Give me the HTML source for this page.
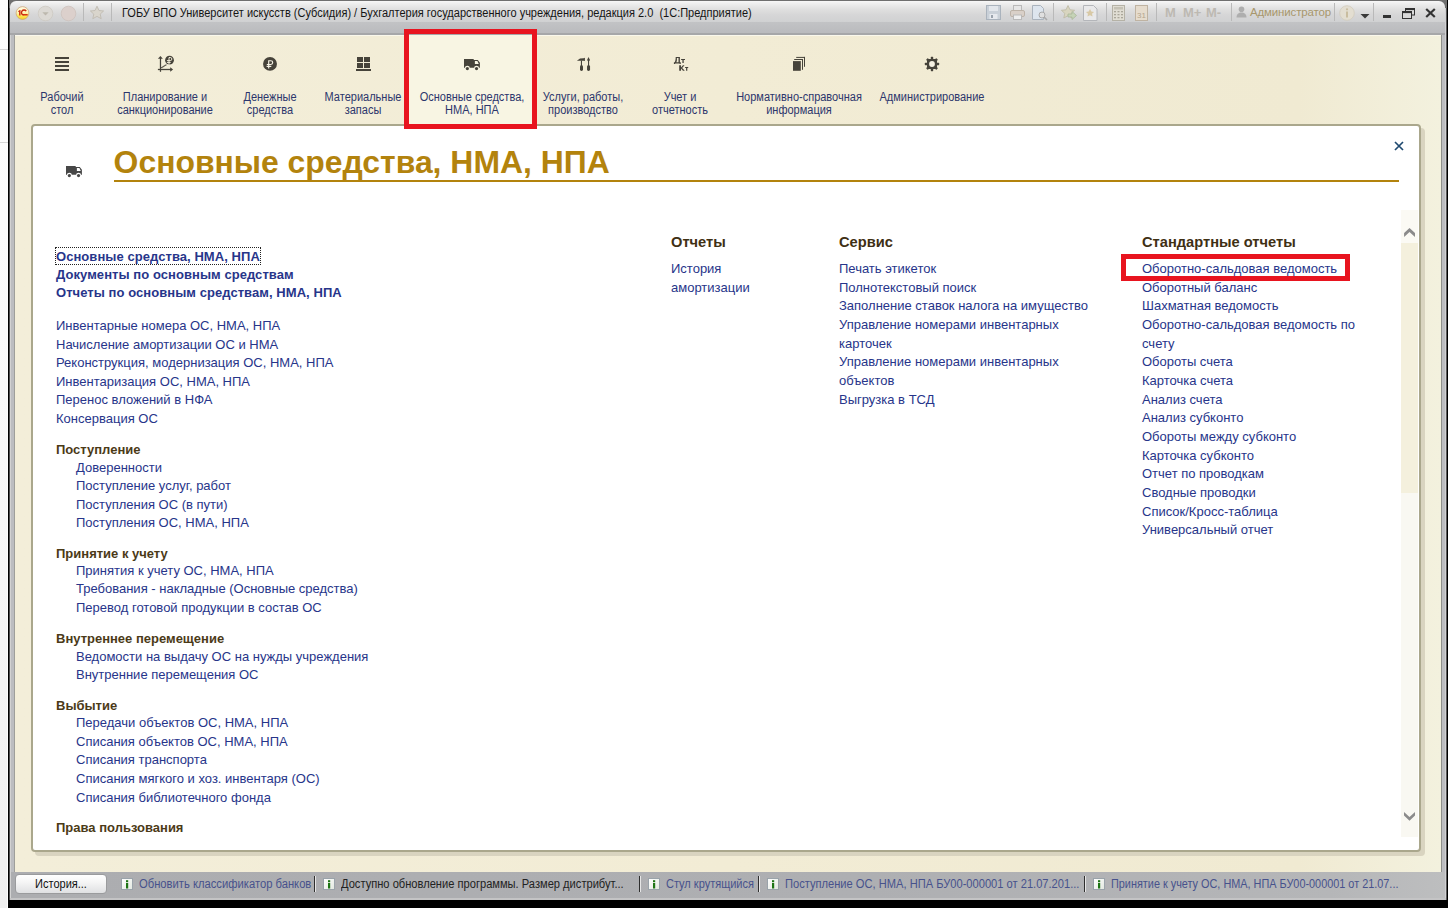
<!DOCTYPE html>
<html><head><meta charset="utf-8">
<style>
*{margin:0;padding:0;box-sizing:border-box}
html,body{width:1448px;height:908px;overflow:hidden;background:#fdfdfd;font-family:"Liberation Sans",sans-serif;position:relative}
.a{position:absolute}
.t{position:absolute;white-space:nowrap;line-height:15px}
.lk{color:#27358a;font-size:13px}
.lb{color:#27358a;font-size:13px;font-weight:bold;letter-spacing:0.06px}
.gh{color:#4b3a17;font-size:13px;font-weight:bold}
.ch{color:#3f3014;font-size:14.67px;font-weight:bold;line-height:17px}
.tl{color:#2c366c;font-size:12px;text-align:center;line-height:13px;transform:scaleX(0.917);transform-origin:50% 0}
.sg{font-size:12px;line-height:14px;transform:scaleX(0.917);transform-origin:0 0}
.sb{font-size:11px;line-height:13px;color:#39427c}
</style></head><body>
<!-- outer strip lines -->
<div class="a" style="left:0;top:0;width:7px;height:908px;background:linear-gradient(#fdfdfd 0,#fafafa 330px,#f5f5f5 640px,#efefef 908px)"></div>
<div class="a" style="left:0;top:49px;width:8px;height:1px;background:#d6d6d6"></div>
<div class="a" style="left:0;top:142px;width:8px;height:1px;background:#d6d6d6"></div>
<!-- black borders -->
<div class="a" style="left:8px;top:0;width:1px;height:908px;background:#000"></div>
<div class="a" style="left:8px;top:900px;width:1440px;height:8px;background:#000"></div>
<div class="a" style="left:1447px;top:0;width:1px;height:908px;background:#000"></div>
<!-- window frame -->
<div class="a" style="left:9px;top:0;width:1438px;height:900px;background:#bcbdc0"></div>
<div class="a" style="left:9px;top:0;width:1px;height:900px;background:#4a4a4a"></div>
<div class="a" style="left:10px;top:0;width:1px;height:900px;background:#d2d2d2"></div>
<div class="a" style="left:14px;top:35px;width:1px;height:837px;background:#9e9e9a"></div>
<div class="a" style="left:1441px;top:35px;width:1px;height:837px;background:#8e8f8b"></div>
<div class="a" style="left:1445px;top:0;width:1px;height:900px;background:#d0d0d2"></div>
<div class="a" style="left:1446px;top:0;width:1px;height:900px;background:#5a5a5a"></div>
<div class="a" style="left:9px;top:0;width:1438px;height:1px;background:#6f6f6f"></div>
<!-- title bar -->
<div class="a" style="left:9px;top:0;width:8px;height:8px;background:#707070"></div>
<div class="a" style="left:1439px;top:0;width:8px;height:8px;background:#707070"></div>
<div class="a" style="left:10px;top:1px;width:1435px;height:21px;border-radius:6px 6px 0 0;background:linear-gradient(#f8f8f8 0,#f0f0f0 2px,#e0e0e0 8px,#d6d6d7 14px,#d0d1d2 21px)"></div>
<div class="a" style="left:10px;top:22px;width:1435px;height:12px;background:linear-gradient(#c2c3c5,#b9babd)"></div>
<div class="a" style="left:10px;top:33px;width:1435px;height:2px;background:#a6a7a9"></div>
<!-- beige area -->
<div class="a" id="beige" style="left:15px;top:35px;width:1426px;height:837px;background:linear-gradient(90deg,#f3eed9,#f2ecd5 50%,#f0ead2 90%,#f3f1de)"></div>
<div class="a" style="left:15px;top:35px;width:1426px;height:1px;background:#faf8ec"></div>
<!-- status bar -->
<div class="a" style="left:11px;top:872px;width:1434px;height:26px;background:linear-gradient(90deg,#acadb0,#aeafb2 60%,#b5b6b8 92%,#bdbebf)"></div>
<div class="a" style="left:10px;top:898px;width:1436px;height:2px;background:#c4c4c5"></div>

<svg class="a" style="left:0;top:0" width="40" height="30" viewBox="0 0 40 30"><defs><linearGradient id="lg" x1="0" y1="0" x2="0" y2="1"><stop offset="0" stop-color="#fffbe6"/><stop offset="0.5" stop-color="#fff3b0"/><stop offset="0.75" stop-color="#fde44a"/><stop offset="1" stop-color="#f5cf2a"/></linearGradient></defs><circle cx="22.5" cy="13.05" r="6.4" fill="url(#lg)" stroke="#c89f70" stroke-width="0.7"/><path d="M18 11.2L19.9 9.9H20.5V15.5H19.1V11.6L18.4 12Z" fill="#c8280e"/><path d="M26.2 11.1A2.6 2.6 0 1 0 23.4 15.1" fill="none" stroke="#c8280e" stroke-width="1.4"/><rect x="23" y="14.1" width="4.7" height="1.4" fill="#d0200a"/></svg>
<svg class="a" style="left:37px;top:5px" width="17" height="17"><circle cx="8.5" cy="8.5" r="7.3" fill="#dcd9d4" stroke="#cdc9c2" stroke-width="0.8"/><path d="M5.3 7.3h6.4l-3.2 3.3z" fill="#bdb8ae"/></svg>
<svg class="a" style="left:60px;top:5px" width="17" height="17"><circle cx="8.5" cy="8.5" r="7.3" fill="#dcd0cc" stroke="#cdc2bd" stroke-width="0.8"/></svg>
<div class="a" style="left:83px;top:3px;width:1px;height:18px;background:#b9b9b9"></div>
<div class="a" style="left:111px;top:3px;width:1px;height:18px;background:#b9b9b9"></div>
<div class="a" style="left:1053px;top:3px;width:1px;height:18px;background:#b9b9b9"></div>
<div class="a" style="left:1106px;top:3px;width:1px;height:18px;background:#b9b9b9"></div>
<div class="a" style="left:1156px;top:3px;width:1px;height:18px;background:#b9b9b9"></div>
<div class="a" style="left:1231px;top:3px;width:1px;height:18px;background:#b9b9b9"></div>
<div class="a" style="left:1334px;top:3px;width:1px;height:18px;background:#b9b9b9"></div>
<div class="a" style="left:1373px;top:3px;width:1px;height:18px;background:#b9b9b9"></div>
<svg class="a" style="left:89px;top:5px" width="16" height="16" viewBox="0 0 16 16"><path d="M8 1.2l2 4.3 4.6.5-3.4 3.1 1 4.6L8 11.4l-4.2 2.3 1-4.6L1.4 6l4.6-.5z" fill="#d9d5cc" stroke="#bcb7ad" stroke-width="0.8"/></svg>
<div class="t sg" style="left:122px;top:6px;color:#151515">ГОБУ ВПО Университет искусств (Субсидия) / Бухгалтерия государственного учреждения, редакция 2.0&nbsp; (1С:Предприятие)</div>
<svg class="a" style="left:986px;top:5px" width="15" height="15"><rect x="0.5" y="0.5" width="14" height="14" fill="#c9d0d8" stroke="#aab3bd"/><rect x="3" y="1" width="9" height="5" fill="#e3e7ec"/><rect x="3.5" y="9" width="8" height="5" fill="#e6e9ee"/><rect x="5" y="10" width="2" height="3" fill="#9aa3ad"/></svg>
<svg class="a" style="left:1010px;top:5px" width="15" height="15"><rect x="3.5" y="0.5" width="8" height="5" fill="#e6e6e6" stroke="#b9b9b9"/><rect x="0.5" y="5.5" width="14" height="6" rx="1.5" fill="#d9d0c8" stroke="#bdb3a8"/><rect x="3.5" y="10" width="8" height="4.5" fill="#eeeeee" stroke="#b9b9b9"/></svg>
<svg class="a" style="left:1032px;top:5px" width="16" height="16"><path d="M0.5 0.5h8l3 3v11h-11z" fill="#dde5ee" stroke="#aab3bd"/><circle cx="10" cy="10" r="3" fill="#dfdfdf" stroke="#a9a9a9"/><path d="M12 12l3 3" stroke="#a9a9a9" stroke-width="1.6"/></svg>
<svg class="a" style="left:1060px;top:4px" width="18" height="18" viewBox="0 0 18 18"><path d="M8 1.5l2 4.3 4.6.5-3.4 3.1 1 4.6L8 11.7l-4.2 2.3 1-4.6L1.4 6.3l4.6-.5z" fill="#d8d5bf" stroke="#bdb9a3" stroke-width="0.8"/><path d="M8 10h4v-2.5l4.5 4-4.5 4V13H8z" fill="#c5d3b6" stroke="#a9b79a" stroke-width="0.8"/></svg>
<svg class="a" style="left:1083px;top:5px" width="15" height="16"><path d="M0.5 0.5h10l3.5 3.5v11.5h-13.5z" fill="#e9e9ea" stroke="#b4b6ba"/><path d="M7 4l1.3 2.6 2.8.3-2.1 1.9.6 2.8L7 10.3l-2.6 1.3.6-2.8L2.9 6.9l2.8-.3z" fill="#d8c9a6"/></svg>
<svg class="a" style="left:1112px;top:5px" width="13" height="16"><rect x="0.5" y="0.5" width="12" height="15" fill="#e0ddd3" stroke="#b5b2a6"/><rect x="2" y="2" width="9" height="2.5" fill="#c5c2b5"/><g fill="#aaa69a"><rect x="2" y="6" width="2" height="1.3"/><rect x="5.5" y="6" width="2" height="1.3"/><rect x="9" y="6" width="2" height="1.3"/><rect x="2" y="9" width="2" height="1.3"/><rect x="5.5" y="9" width="2" height="1.3"/><rect x="9" y="9" width="2" height="1.3"/><rect x="2" y="12" width="2" height="1.3"/><rect x="5.5" y="12" width="2" height="1.3"/><rect x="9" y="12" width="2" height="1.3"/></g></svg>
<svg class="a" style="left:1135px;top:5px" width="13" height="16"><rect x="0.5" y="0.5" width="12" height="15" fill="#e6dccd" stroke="#bfb3a2"/><text x="6.5" y="13" font-family="Liberation Sans" font-size="8" text-anchor="middle" fill="#b3a58f">31</text></svg>
<div class="t" style="left:1165px;top:5px;font-size:13px;line-height:15px;font-weight:bold;color:#bdb9b2">M</div>
<div class="t" style="left:1183px;top:5px;font-size:13px;line-height:15px;font-weight:bold;color:#bdb9b2">M+</div>
<div class="t" style="left:1206px;top:5px;font-size:13px;line-height:15px;font-weight:bold;color:#bdb9b2">M-</div>
<svg class="a" style="left:1236px;top:6px" width="11" height="12"><circle cx="5.5" cy="3.3" r="2.8" fill="#aeaeae"/><path d="M0.5 11.5c0-3.5 2.2-5 5-5s5 1.5 5 5z" fill="#aeaeae"/></svg>
<div class="t" style="left:1250px;top:5px;font-size:11.5px;line-height:14px;color:#a8976c;letter-spacing:-0.15px">Администратор</div>
<svg class="a" style="left:1339px;top:5px" width="16" height="16"><circle cx="8" cy="8" r="7.3" fill="#e3ded1" stroke="#d2ccbc" stroke-width="0.8"/><rect x="7" y="6.5" width="2" height="6" fill="#c9bd9f"/><circle cx="8" cy="4.3" r="1.1" fill="#c9bd9f"/></svg>
<svg class="a" style="left:1360px;top:13px" width="10" height="6"><path d="M0.5 1h9l-4.5 4.5z" fill="#3a3a3a"/></svg>
<div class="a" style="left:1383px;top:15px;width:8px;height:3px;background:#333"></div>
<svg class="a" style="left:1402px;top:8px" width="13" height="11"><rect x="3.5" y="0.5" width="9" height="6.5" fill="none" stroke="#333"/><rect x="3.5" y="0.5" width="9" height="1.6" fill="#333"/><rect x="0.5" y="3.5" width="9" height="7" fill="#d9d9d9" stroke="#333"/><rect x="0.5" y="3.5" width="9" height="1.6" fill="#333"/></svg>
<svg class="a" style="left:1425px;top:8px" width="11" height="10"><path d="M1.2 1 L9.8 9 M9.8 1 L1.2 9" stroke="#333" stroke-width="2.2"/></svg>
<div class="a" style="left:409px;top:35px;width:123px;height:89px;background:#f8f5e3"></div>
<div class="t tl" style="left:-18.200000000000003px;width:160px;top:91.0px">Рабочий<br>стол</div>
<div class="t tl" style="left:85px;width:160px;top:91.0px">Планирование и<br>санкционирование</div>
<div class="t tl" style="left:190px;width:160px;top:91.0px">Денежные<br>средства</div>
<div class="t tl" style="left:283.3px;width:160px;top:91.0px">Материальные<br>запасы</div>
<div class="t tl" style="left:391.5px;width:160px;top:91.0px">Основные средства,<br>НМА, НПА</div>
<div class="t tl" style="left:503.4px;width:160px;top:91.0px">Услуги, работы,<br>производство</div>
<div class="t tl" style="left:600px;width:160px;top:91.0px">Учет и<br>отчетность</div>
<div class="t tl" style="left:719.3px;width:160px;top:91.0px">Нормативно-справочная<br>информация</div>
<div class="t tl" style="left:851.7px;width:160px;top:91.0px">Администрирование<br></div>
<svg class="a" style="left:55px;top:57px" width="14" height="14"><g fill="#46433a"><rect x="0" y="0" width="14" height="2"/><rect x="0" y="4" width="14" height="2"/><rect x="0" y="8" width="14" height="2"/><rect x="0" y="12" width="14" height="2"/></g></svg>
<svg class="a" style="left:150px;top:50px" width="40" height="30" viewBox="150 50 40 30"><g fill="#46433a"><path d="M157.9 58.8L160.4 55.9L162.9 58.8Z"/><rect x="159.85" y="58" width="1.25" height="13.8"/><rect x="157.9" y="68.85" width="13" height="1.3"/><path d="M170.2 67.2L173.1 69.5L170.2 71.8Z"/></g><path d="M161 67.6h1.3v-0.8h1.3v-0.8h1.3v-0.8h1.3v-0.6" fill="none" stroke="#46433a" stroke-width="0.9"/><circle cx="169.5" cy="60.2" r="4.4" fill="#46433a"/><path d="M169 64.6V57.5h1.3a1.55 1.55 0 0 1 0 3.1H166.9M166.9 62.4h3.8" fill="none" stroke="#f3eed9" stroke-width="1"/></svg>
<svg class="a" style="left:250px;top:50px" width="40" height="30" viewBox="250 50 40 30"><circle cx="270" cy="63.9" r="6.95" fill="#46433a"/><path d="M268.7 68.6V60.7h2.1a1.9 1.9 0 0 1 0 3.8H266.8M266.6 66.4h4.7" fill="none" stroke="#f7f3e6" stroke-width="1.15"/></svg>
<svg class="a" style="left:356px;top:57px" width="16" height="15"><g fill="#46433a"><rect x="1" y="0" width="6" height="5"/><rect x="8" y="0" width="6" height="5"/><rect x="1" y="6" width="6" height="5"/><rect x="8" y="6" width="6" height="5"/><rect x="0" y="12" width="15" height="2"/></g></svg>
<svg class="a" style="left:462px;top:57.1px" width="20" height="14" viewBox="-2 -2 20 14"><path d="M0 0H9.7V1.1H13.8L15.9 3.8V8.7H15A2.45 1.95 0 0 0 10.1 8.7H5.8A2.45 1.95 0 0 0 0.9 8.7H0Z" fill="#46433a"/><path d="M10.9 1.9H13.4L14.8 4.9H10.9Z" fill="#f8f5e3"/><circle cx="3.35" cy="9.6" r="1.6" fill="#46433a"/><circle cx="12.55" cy="9.6" r="1.6" fill="#46433a"/></svg>
<svg class="a" style="left:565px;top:50px" width="40" height="30" viewBox="565 50 40 30"><g fill="#46433a"><path d="M576.9 60.7L580 58.5L583.6 58.3L584.9 57.8V61.1L583.6 60.7Z"/><rect x="580.9" y="60.5" width="1.1" height="5.5"/><rect x="580" y="65.2" width="3" height="5.7" rx="1.4"/><path d="M588.5 57L590 59.9L589.1 61.2V66H588V61.2L587.1 59.9Z"/><rect x="587.05" y="65.2" width="3" height="5.7" rx="1.4"/></g></svg>
<svg class="a" style="left:660px;top:50px" width="40" height="30" viewBox="660 50 40 30"><g fill="#46433a" fill-rule="evenodd"><path d="M675.7 56.9H679.9V62.2H680.8V64H679.6V63.4H675.3L674.9 64H673.9V62.2H674.7C675.4 60.9 675.7 59.4 675.7 56.9ZM676.9 58V60.3C676.9 61 676.7 61.7 676.3 62.2H678.5V58Z"/><path d="M681.1 58.9H685V60H683.7V63H682.4V60H681.1Z"/><path d="M679.2 65.2H681V67.6L682.9 65.2H684.5L682.2 67.9L684.8 70.8H683L681 68.5V70.8H679.2Z"/><path d="M685.1 67H688.2V68H687.3V70.8H686.1V68H685.1Z"/></g></svg>
<svg class="a" style="left:778px;top:50px" width="40" height="30" viewBox="778 50 40 30"><g fill="#46433a"><rect x="793" y="61.1" width="7.8" height="9.7"/><rect x="794.2" y="59" width="8.8" height="1"/><rect x="802" y="59" width="1" height="10.8"/><rect x="796.2" y="56.9" width="8.8" height="1"/><rect x="804" y="56.9" width="1" height="9.9"/></g></svg>
<svg class="a" style="left:924px;top:56px" width="16" height="16" viewBox="0 0 16 16"><g fill="#46433a"><rect x="6.8" y="0.8" width="2.4" height="14.4" rx="0.6"/><rect x="0.8" y="6.8" width="14.4" height="2.4" rx="0.6"/><rect x="6.8" y="0.8" width="2.4" height="14.4" rx="0.6" transform="rotate(45 8 8)"/><rect x="6.8" y="0.8" width="2.4" height="14.4" rx="0.6" transform="rotate(-45 8 8)"/><rect x="3" y="3" width="10" height="10"/></g><circle cx="8" cy="8" r="2.9" fill="#f5f1e2"/></svg>
<div class="a" style="left:31px;top:124px;width:1390px;height:728px;border:2px solid #aaa78c;border-radius:4px;background:#fff;box-shadow:4px 4px 0 #d9d4c0"></div>
<div class="t" style="left:113.6px;top:145px;font-size:31.9px;line-height:34px;font-weight:bold;color:#b3830d">Основные средства, НМА, НПА</div>
<div class="a" style="left:114px;top:180px;width:1285px;height:2px;background:#b3830d"></div>
<div class="t lb" style="left:56px;top:248.5px">Основные средства, НМА, НПА</div>
<div class="t lb" style="left:56px;top:266.6px">Документы по основным средствам</div>
<div class="t lb" style="left:56px;top:285.2px">Отчеты по основным средствам, НМА, НПА</div>
<div class="t lk" style="left:56px;top:318.0px">Инвентарные номера ОС, НМА, НПА</div>
<div class="t lk" style="left:56px;top:336.5px">Начисление амортизации ОС и НМА</div>
<div class="t lk" style="left:56px;top:355.0px">Реконструкция, модернизация ОС, НМА, НПА</div>
<div class="t lk" style="left:56px;top:373.5px">Инвентаризация ОС, НМА, НПА</div>
<div class="t lk" style="left:56px;top:392.0px">Перенос вложений в НФА</div>
<div class="t lk" style="left:56px;top:410.5px">Консервация ОС</div>
<div class="t gh" style="left:56px;top:441.5px">Поступление</div>
<div class="t lk" style="left:76px;top:459.5px">Доверенности</div>
<div class="t lk" style="left:76px;top:478.3px">Поступление услуг, работ</div>
<div class="t lk" style="left:76px;top:497.0px">Поступления ОС (в пути)</div>
<div class="t lk" style="left:76px;top:515.3px">Поступления ОС, НМА, НПА</div>
<div class="t gh" style="left:56px;top:545.5px">Принятие к учету</div>
<div class="t lk" style="left:76px;top:562.5px">Принятия к учету ОС, НМА, НПА</div>
<div class="t lk" style="left:76px;top:581.0px">Требования - накладные (Основные средства)</div>
<div class="t lk" style="left:76px;top:599.7px">Перевод готовой продукции в состав ОС</div>
<div class="t gh" style="left:56px;top:630.7px">Внутреннее перемещение</div>
<div class="t lk" style="left:76px;top:648.8px">Ведомости на выдачу ОС на нужды учреждения</div>
<div class="t lk" style="left:76px;top:667.0px">Внутренние перемещения ОС</div>
<div class="t gh" style="left:56px;top:697.8px">Выбытие</div>
<div class="t lk" style="left:76px;top:715.0px">Передачи объектов ОС, НМА, НПА</div>
<div class="t lk" style="left:76px;top:733.7px">Списания объектов ОС, НМА, НПА</div>
<div class="t lk" style="left:76px;top:752.3px">Списания транспорта</div>
<div class="t lk" style="left:76px;top:771.0px">Списания мягкого и хоз. инвентаря (ОС)</div>
<div class="t lk" style="left:76px;top:789.5px">Списания библиотечного фонда</div>
<div class="t gh" style="left:56px;top:820.3px">Права пользования</div>
<div class="a" style="left:55px;top:247px;width:206px;height:18px;border:1px dotted #222"></div>
<div class="t ch" style="left:671px;top:234.0px">Отчеты</div>
<div class="t ch" style="left:839px;top:234.0px">Сервис</div>
<div class="t ch" style="left:1142px;top:234.0px">Стандартные отчеты</div>
<div class="t lk" style="left:671px;top:260.7px">История</div>
<div class="t lk" style="left:671px;top:279.9px">амортизации</div>
<div class="t lk" style="left:839px;top:260.9px">Печать этикеток</div>
<div class="t lk" style="left:839px;top:279.6px">Полнотекстовый поиск</div>
<div class="t lk" style="left:839px;top:298.3px">Заполнение ставок налога на имущество</div>
<div class="t lk" style="left:839px;top:317.0px">Управление номерами инвентарных</div>
<div class="t lk" style="left:839px;top:335.7px">карточек</div>
<div class="t lk" style="left:839px;top:354.4px">Управление номерами инвентарных</div>
<div class="t lk" style="left:839px;top:373.1px">объектов</div>
<div class="t lk" style="left:839px;top:391.8px">Выгрузка в ТСД</div>
<div class="t lk" style="left:1142px;top:260.8px">Оборотно-сальдовая ведомость</div>
<div class="t lk" style="left:1142px;top:279.5px">Оборотный баланс</div>
<div class="t lk" style="left:1142px;top:298.1px">Шахматная ведомость</div>
<div class="t lk" style="left:1142px;top:316.8px">Оборотно-сальдовая ведомость по</div>
<div class="t lk" style="left:1142px;top:335.5px">счету</div>
<div class="t lk" style="left:1142px;top:354.2px">Обороты счета</div>
<div class="t lk" style="left:1142px;top:372.8px">Карточка счета</div>
<div class="t lk" style="left:1142px;top:391.5px">Анализ счета</div>
<div class="t lk" style="left:1142px;top:410.2px">Анализ субконто</div>
<div class="t lk" style="left:1142px;top:428.8px">Обороты между субконто</div>
<div class="t lk" style="left:1142px;top:447.5px">Карточка субконто</div>
<div class="t lk" style="left:1142px;top:466.2px">Отчет по проводкам</div>
<div class="t lk" style="left:1142px;top:484.8px">Сводные проводки</div>
<div class="t lk" style="left:1142px;top:503.5px">Список/Кросс-таблица</div>
<div class="t lk" style="left:1142px;top:522.2px">Универсальный отчет</div>
<div class="a" style="left:1121px;top:254px;width:229px;height:27px;border:5px solid #e8141f"></div>
<div class="a" style="left:1401px;top:210px;width:17px;height:33px;background:#fbfaf4"></div>
<div class="a" style="left:1401px;top:243px;width:17px;height:250px;background:#f4f0dd"></div>
<div class="a" style="left:1401px;top:493px;width:17px;height:344px;background:#f9f8f2"></div>
<svg class="a" style="left:1395px;top:215px" width="30" height="30" viewBox="1395 215 30 30"><path d="M1404.1 233.1L1409.5 227.9L1415 233.1V237L1409.5 232L1404.1 237Z" fill="#8b8b8b"/></svg>
<svg class="a" style="left:1395px;top:800px" width="30" height="30" viewBox="1395 800 30 30"><path d="M1404 811.9L1409.5 817L1415 811.9V815.5L1409.5 820.7L1404 815.5Z" fill="#8b8b8b"/></svg>
<svg class="a" style="left:1392px;top:139px" width="14" height="14"><path d="M3 3 L11 11 M11 3 L3 11" stroke="#1f4a70" stroke-width="1.7"/></svg>
<svg class="a" style="left:64.1px;top:164.1px" width="20" height="14" viewBox="-2 -2 20 14"><path d="M0 0H9.7V1.1H13.8L15.9 3.8V8.7H15A2.45 1.95 0 0 0 10.1 8.7H5.8A2.45 1.95 0 0 0 0.9 8.7H0Z" fill="#474747"/><path d="M10.9 1.9H13.4L14.8 4.9H10.9Z" fill="#fff"/><circle cx="3.35" cy="9.6" r="1.6" fill="#474747"/><circle cx="12.55" cy="9.6" r="1.6" fill="#474747"/></svg>
<div class="a" style="left:15px;top:874px;width:92px;height:20px;border:1px solid #9a9b9d;border-radius:4px;background:linear-gradient(#ffffff,#f5f5f5 40%,#dfe0e2)"></div>
<div class="t sg" style="left:15px;width:92px;text-align:center;top:877px;color:#111;transform-origin:46px 0">История...</div>
<svg class="a" style="left:121px;top:878px" width="12" height="12"><defs><linearGradient id="ig121" x1="0" y1="0" x2="1" y2="1"><stop offset="0" stop-color="#ffffff"/><stop offset="1" stop-color="#e2e8e0"/></linearGradient></defs><rect x="0.5" y="0.5" width="11" height="11" fill="url(#ig121)" stroke="#9aa3aa"/><rect x="5" y="4.8" width="2.2" height="5.7" fill="#1d7414"/><rect x="5" y="2.2" width="2.2" height="1.8" fill="#1d7414"/></svg>
<div class="t sg" style="left:138.5px;top:876.5px;color:#47528c;transform:scaleX(0.935)">Обновить классификатор банков</div>
<svg class="a" style="left:323px;top:878px" width="12" height="12"><defs><linearGradient id="ig323" x1="0" y1="0" x2="1" y2="1"><stop offset="0" stop-color="#ffffff"/><stop offset="1" stop-color="#e2e8e0"/></linearGradient></defs><rect x="0.5" y="0.5" width="11" height="11" fill="url(#ig323)" stroke="#9aa3aa"/><rect x="5" y="4.8" width="2.2" height="5.7" fill="#1d7414"/><rect x="5" y="2.2" width="2.2" height="1.8" fill="#1d7414"/></svg>
<div class="t sg" style="left:341px;top:876.5px;color:#222;transform:scaleX(0.927)">Доступно обновление программы. Размер дистрибут...</div>
<svg class="a" style="left:648px;top:878px" width="12" height="12"><defs><linearGradient id="ig648" x1="0" y1="0" x2="1" y2="1"><stop offset="0" stop-color="#ffffff"/><stop offset="1" stop-color="#e2e8e0"/></linearGradient></defs><rect x="0.5" y="0.5" width="11" height="11" fill="url(#ig648)" stroke="#9aa3aa"/><rect x="5" y="4.8" width="2.2" height="5.7" fill="#1d7414"/><rect x="5" y="2.2" width="2.2" height="1.8" fill="#1d7414"/></svg>
<div class="t sg" style="left:665.5px;top:876.5px;color:#47528c;transform:scaleX(0.917)">Стул крутящийся</div>
<svg class="a" style="left:767px;top:878px" width="12" height="12"><defs><linearGradient id="ig767" x1="0" y1="0" x2="1" y2="1"><stop offset="0" stop-color="#ffffff"/><stop offset="1" stop-color="#e2e8e0"/></linearGradient></defs><rect x="0.5" y="0.5" width="11" height="11" fill="url(#ig767)" stroke="#9aa3aa"/><rect x="5" y="4.8" width="2.2" height="5.7" fill="#1d7414"/><rect x="5" y="2.2" width="2.2" height="1.8" fill="#1d7414"/></svg>
<div class="t sg" style="left:785px;top:876.5px;color:#47528c;transform:scaleX(0.927)">Поступление ОС, НМА, НПА БУ00-000001 от 21.07.201...</div>
<svg class="a" style="left:1093px;top:878px" width="12" height="12"><defs><linearGradient id="ig1093" x1="0" y1="0" x2="1" y2="1"><stop offset="0" stop-color="#ffffff"/><stop offset="1" stop-color="#e2e8e0"/></linearGradient></defs><rect x="0.5" y="0.5" width="11" height="11" fill="url(#ig1093)" stroke="#9aa3aa"/><rect x="5" y="4.8" width="2.2" height="5.7" fill="#1d7414"/><rect x="5" y="2.2" width="2.2" height="1.8" fill="#1d7414"/></svg>
<div class="t sg" style="left:1111px;top:876.5px;color:#47528c;transform:scaleX(0.906)">Принятие к учету ОС, НМА, НПА БУ00-000001 от 21.07...</div>
<div class="a" style="left:314px;top:876px;width:1px;height:16px;background:#2e2e2e"></div><div class="a" style="left:315px;top:876px;width:1px;height:16px;background:#e6e6e6"></div>
<div class="a" style="left:639px;top:876px;width:1px;height:16px;background:#2e2e2e"></div><div class="a" style="left:640px;top:876px;width:1px;height:16px;background:#e6e6e6"></div>
<div class="a" style="left:758px;top:876px;width:1px;height:16px;background:#2e2e2e"></div><div class="a" style="left:759px;top:876px;width:1px;height:16px;background:#e6e6e6"></div>
<div class="a" style="left:1084px;top:876px;width:1px;height:16px;background:#2e2e2e"></div><div class="a" style="left:1085px;top:876px;width:1px;height:16px;background:#e6e6e6"></div>
<div class="a" style="left:404px;top:29px;width:133px;height:100px;border:5px solid #e8141f"></div>
</body></html>
